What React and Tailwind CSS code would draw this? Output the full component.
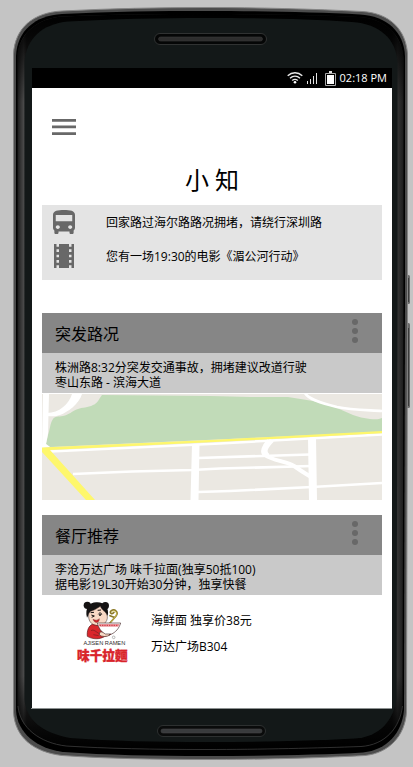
import React from "react";

function PhoneFrame() {
  return (
    <svg
      className="absolute inset-0 h-full w-full"
      viewBox="0 0 413 767"
      preserveAspectRatio="none"
      aria-hidden="true"
    >
      <defs>
        <linearGradient id="sideGlow" x1="0" x2="1" y1="0" y2="0">
          <stop offset="0" stopColor="#1c1c1c" />
          <stop offset="0.016" stopColor="#4a4a4a" />
          <stop offset="0.024" stopColor="#2a2a2a" />
          <stop offset="0.97" stopColor="#161616" />
          <stop offset="0.985" stopColor="#343434" />
          <stop offset="1" stopColor="#1c1c1c" />
        </linearGradient>
        <linearGradient id="edgeFade" x1="0" x2="0" y1="0" y2="1">
          <stop offset="0" stopColor="#000" />
          <stop offset="0.03" stopColor="#000" stopOpacity="0.85" />
          <stop offset="0.12" stopColor="#000" stopOpacity="0" />
          <stop offset="0.9" stopColor="#000" stopOpacity="0" />
          <stop offset="0.97" stopColor="#000" stopOpacity="0.8" />
          <stop offset="1" stopColor="#000" />
        </linearGradient>
      </defs>
      <rect x="406" y="275" width="4" height="29" rx="1.5" fill="#6b6b6b" />
      <rect x="408" y="278" width="1" height="24" fill="#3c3c3c" />
      <rect x="406" y="323" width="4" height="85" rx="1.5" fill="#6b6b6b" />
      <rect x="408" y="328" width="1" height="78" fill="#3c3c3c" />
      <path
        d="M13.5 54C15 28 33 12.500 62 11C110 8.500 160 7.500 206 7.500C255 7.500 315 9 362 11.500C390 13 406 30 407.500 54V300L406.500 712C405 736 389 753 365 755.500C320 758 260 759.500 206 759.500C155 759.500 105 758.500 62 755.500C34 752 15 738 13.500 712Z"
        fill="#4c4c4c"
        stroke="#858585"
        strokeWidth="1"
      />
      <path
        d="M16 56C17 31 35 15.500 62 14C110 11.500 160 11 206 11C255 11 315 12 360 14.500C387 16 404 32 405 56V300L404 710C402 733 387 750 363 752.500C320 755 260 756 206 756C155 756 105 755 64 752C37 749 17 733 16 710Z"
        fill="#000"
      />
      <path
        d="M17.500 56C19 34 37 17.500 64 16.500C110 14.500 160 14 206 14C255 14 315 15 358 17C384 18 402 34 403.500 58V300L402.500 704C400 728 385 745 361 746.500C320 748 260 749.500 206 749.500C155 749.500 105 748.500 66 746C39 742 18 727 17.500 704Z"
        fill="url(#sideGlow)"
      />
      <path
        d="M17.500 56C19 34 37 17.500 64 16.500C110 14.500 160 14 206 14C255 14 315 15 358 17C384 18 402 34 403.500 58V300L402.500 704C400 728 385 745 361 746.500C320 748 260 749.500 206 749.500C155 749.500 105 748.500 66 746C39 742 18 727 17.500 704Z"
        fill="url(#edgeFade)"
      />
      <path
        d="M18 706C20 728 40 743 66 746C105 748.500 155 749.500 206 749.500C260 749.500 320 748 361 746.500C385 745 400 728 402.500 706"
        fill="none"
        stroke="#3a3a3a"
        strokeWidth="0.8"
      />
      <path
        d="M24.500 62C26 39 42 24 68 21.500C110 19 160 18 206 18C255 18 310 19 352 22C380 24 396 39 397.500 62V300L396.500 698C394 720 380 737 355 738.500C310 741 260 742 206 742C155 742 110 741 70 738C43 733 25 720 24.500 698Z"
        fill="#131818"
      />
      <rect x="154.500" y="33.500" width="112" height="11" rx="5.500" fill="#050606" stroke="#303232" />
      <rect x="158.500" y="37" width="104" height="4" rx="2" fill="#2d2d2d" stroke="#3a3a3a" strokeWidth="0.6" />
      <rect x="157.500" y="725.500" width="108" height="11" rx="5.500" fill="#0a0b0b" stroke="#2d3030" />
      <rect x="161" y="729" width="101" height="4" rx="2" fill="#393b3d" stroke="#434547" strokeWidth="0.6" />
      <rect x="31" y="708" width="361" height="1" fill="#8c9191" />
    </svg>
  );
}

function StatusBar() {
  return (
    <div className="flex h-5 items-center justify-end bg-black pr-[5px] text-white">
      <svg className="mr-1 h-[14px] w-4" viewBox="0 0 16 14" fill="none" stroke="#e8e8e8" strokeWidth="1.4">
        <path d="M.7 4.800C5 .8 11 .8 15.300 4.800M3 7.300C6 4.500 10 4.500 13 7.300M5.200 9.600C7 8 9 8 10.800 9.600" />
        <circle cx="8" cy="11.300" r="1.300" fill="#fff" stroke="none" />
      </svg>
      <svg className="mr-[7px] h-3 w-[11px]" viewBox="0 0 11 12" fill="#e4e4e4">
        <path d="M0 9h1v3H0zM3 7h1v5H3zM6 4h1v8H6zM9 1h1v11H9z" />
      </svg>
      <svg className="mr-1 h-[15px] w-[11px]" viewBox="0 0 11 15">
        <path d="M4 0h3v2H4z" fill="#ddd" />
        <path d="M.5 2.500h10v12H.5z" fill="#000" stroke="#aaa" />
        <path d="M2 4h7v9H2z" fill="#fff" />
      </svg>
      <time className="text-[11px] leading-5">02:18 PM</time>
    </div>
  );
}

function BusIcon() {
  return (
    <svg className="h-6 w-[22px] shrink-0" viewBox="4 2 16 19" preserveAspectRatio="none" fill="#686868" aria-hidden="true">
      <path d="M4 16c0 .88.39 1.670 1 2.220V20c0 .55.45 1 1 1h1c.55 0 1-.45 1-1v-1h8v1c0 .55.45 1 1 1h1c.55 0 1-.45 1-1v-1.780c.61-.55 1-1.340 1-2.220V6c0-3.500-3.580-4-8-4s-8 .5-8 4v10zm3.500 1c-.83 0-1.500-.67-1.500-1.500S6.670 14 7.500 14s1.500.67 1.500 1.500S8.330 17 7.500 17zm9 0c-.83 0-1.500-.67-1.500-1.500s.67-1.500 1.500-1.500 1.500.67 1.500 1.500-.67 1.500-1.500 1.500zm1.500-6H6V6h12v5z" />
    </svg>
  );
}

function FilmIcon() {
  return (
    <svg className="mx-px h-6 w-5 shrink-0" viewBox="4 3 16 18" preserveAspectRatio="none" fill="#686868" aria-hidden="true">
      <path d="M18 3v2h-2V3H8v2H6V3H4v18h2v-2h2v2h8v-2h2v2h2V3h-2zM8 17H6v-2h2v2zm0-4H6v-2h2v2zm0-4H6V7h2v2zm10 8h-2v-2h2v2zm0-4h-2v-2h2v2zm0-4h-2V7h2v2z" />
    </svg>
  );
}

function Notice({ icon, children }) {
  return (
    <li className="flex h-[34px] items-center gap-[31px]">
      {icon}
      <span className="pt-[2px]">{children}</span>
    </li>
  );
}

function CardHeader({ title, detail }) {
  return (
    <>
      <header className="flex h-10 items-center justify-between bg-[#868686] pr-6 pl-[13px]">
        <h2 className="pt-[2px] text-base">{title}</h2>
        <button type="button" aria-label="更多" className="mb-1">
          <svg className="h-6 w-[6px]" viewBox="0 0 6 24" fill="#686868">
            <circle cx="3" cy="3" r="3" />
            <circle cx="3" cy="12" r="3" />
            <circle cx="3" cy="21" r="3" />
          </svg>
        </button>
      </header>
      <p className="bg-[#c9c9c9] pt-[7px] pr-3 pb-[3px] pl-[13px] leading-[15px] whitespace-pre-line">{detail}</p>
    </>
  );
}

function RouteMap() {
  return (
    <svg className="mt-px h-[106px] w-full" viewBox="0 0 340 106" preserveAspectRatio="none" role="img">
      <rect width="340" height="106" fill="#ebe8e2" />
      <path d="M60 1C57 5 55 10 51 11C46 14 40 13 36 15C30 17 27 21 21 22C16 23 13 22 11 25C8 29 8 36 6 41L4 50L8 53L340 38V24C336 26 331 25 328 25C322 24 316 23 311 21L295 14C287 11 279 9 271 7L246 3L208 3L168 2Z" fill="#c1dbb8" />
      <g fill="none" stroke="#fff" strokeWidth="2.700">
        <path d="M263 -1C266 5 279 9 295 13C309 16 325 16 340 17" />
        <path d="M31 80L90 77.500L150 76L178 74.500L270 72" />
        <path d="M156 64L220 62L268 60.500" />
        <path d="M156 98L188 97L270 93L340 89" />
        <path d="M227 46C222 52 219 58 223 61C231 67 244 67 252 72C259 77 264 80 269 83" strokeWidth="4" />
        <path d="M230 46C224 52 220 58 226 62" strokeWidth="5" />
        <path d="M8 57.500L178 49.500L340 40.500" strokeWidth="2.500" />
      </g>
      <path d="M30 0H40C37 10 26 18 18 21C13 23 9 22 5 22V19C17 19 27 10 30 0Z" fill="#fff" />
      <path d="M1 0H7L6 40L4 50L8 53L0 54Z" fill="#fff" />
      <path d="M150 50H157.500L156.500 106H148.500ZM266 44H274L275 106H267Z" fill="#fff" />
      <path d="M0 53.500L178 45.500L340 37V39.300L178 47.800L8 56L53 106H44L0 58Z" fill="#fef76c" />
    </svg>
  );
}

function RamenLogo() {
  return (
    <svg className="h-[70px] w-[55px] shrink-0" viewBox="30 9 165 210" role="img">
      <g fill="#151313">
        <circle cx="67" cy="31" r="11" />
        <circle cx="121" cy="32" r="11" />
        <path d="M66 68C58 37 76 20 97 22C119 22 134 40 128 62L118 54L107 37C97 47 84 48 77 49Z" />
      </g>
      <path d="M71 63C69 50 80 49 91 43L106 34C112 49 121 47 126 60C131 75 119 91 101 92C84 93 70 81 71 63Z" fill="#f9d9c5" stroke="#332424" strokeWidth="1.5" />
      <path d="M79 60L88 63L80 67M100 58C104 51 109 53 110 59M77 53L87 52M98 46L108 45" fill="none" stroke="#161313" strokeWidth="3" />
      <circle cx="105" cy="60" r="3" fill="#111" />
      <path d="M84 73C91 77 98 76 103 71C104 84 88 87 84 73Z" fill="#d3232b" stroke="#4c1717" strokeWidth="1" />
      <path d="M82 88C71 92 65 108 67 124C84 134 104 133 118 125L138 118L132 104L108 108L103 92C97 92 87 90 82 88Z" fill="#d9262c" stroke="#59191a" strokeWidth="2" />
      <path d="M78 107C86 101 94 112 103 116M85 119L101 122" fill="none" stroke="#741e20" strokeWidth="2" />
      <path d="M104 112C111 108 118 115 128 113L135 120C125 126 111 126 103 120Z" fill="#f9d9c5" stroke="#4c2925" strokeWidth="2" />
      <path d="M135 84L153 63C162 51 149 41 139 47C131 53 141 60 147 52M135 62L147 67" fill="none" stroke="#8b7927" strokeWidth="5" strokeLinecap="round" />
      <path d="M136 83L152 64C160 51 149 44 140 50" fill="none" stroke="#e6d660" strokeWidth="2" />
      <path d="M97 84H167C162 101 151 112 140 117H121C109 111 101 100 97 84Z" fill="#fff" stroke="#4b3030" strokeWidth="2" />
      <path d="M100 87H164L160 95H104Z" fill="#ed969c" />
      <path d="M104 91H160" stroke="#c93840" strokeWidth="3" strokeDasharray="4 3" />
      <circle cx="146" cy="127" r="4" fill="none" stroke="#777" strokeWidth="1.5" />
      <text x="118" y="151" textAnchor="middle" fontFamily="Liberation Sans, sans-serif" fontSize="17" fill="#302d2d">AJISEN RAMEN</text>
      <text x="112" y="194" textAnchor="middle" fontFamily="Noto Sans CJK TC, sans-serif" fontSize="38" fontWeight="900" fill="#d9242b" stroke="#d9242b" strokeWidth="1">味千拉麵</text>
    </svg>
  );
}

export default function App() {
  return (
    <div className="relative min-h-screen bg-[#c4c4c4] pt-[68px] pr-[21px] pb-[59px] pl-8 font-['Open_Sans','Noto_Sans_CJK_SC',sans-serif] text-xs text-black">
      <PhoneFrame />
      <div className="relative bg-white">
        <StatusBar />
        <main className="px-[10px] pb-10">
          <nav className="flex pt-[31px] pl-[10px]">
            <button type="button" aria-label="菜单">
              <svg className="h-4 w-6" viewBox="0 0 24 16" fill="#686868">
                <path d="M0 0h24v2.700H0zM0 6.500h24v2.700H0zM0 13.300h24V16H0z" />
              </svg>
            </button>
          </nav>
          <h1 className="pt-[29px] pb-[9px] text-center text-2xl leading-8">小 知</h1>
          <ul className="bg-[#e4e4e4] pb-[7px] pl-[11px]">
            <Notice icon={<BusIcon />}>回家路过海尔路路况拥堵，请绕行深圳路</Notice>
            <Notice icon={<FilmIcon />}>您有一场19:30的电影《湄公河行动》</Notice>
          </ul>
          <section className="mt-[33px]">
            <CardHeader title="突发路况" detail={"株洲路8:32分突发交通事故，拥堵建议改道行驶\n枣山东路 - 滨海大道"} />
            <RouteMap />
          </section>
          <section className="mt-[15px]">
            <CardHeader title="餐厅推荐" detail={"李沧万达广场 味千拉面(独享50抵100)\n据电影19L30开始30分钟，独享快餐"} />
            <div className="flex gap-[21px] pt-[3px] pl-[33px]">
              <RamenLogo />
              <div className="pt-[10px] leading-[26px]">
                <p>海鲜面 独享价38元</p>
                <p>万达广场B304</p>
              </div>
            </div>
          </section>
        </main>
      </div>
    </div>
  );
}
